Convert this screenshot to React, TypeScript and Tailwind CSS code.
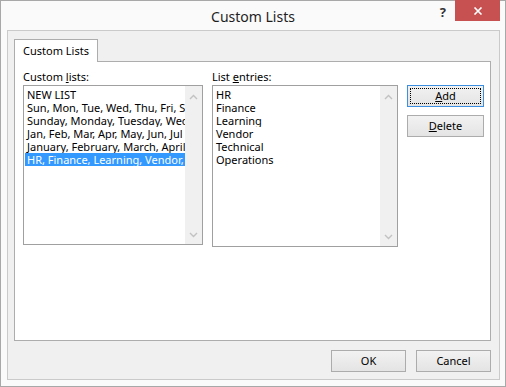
import React from "react";

const font = { fontFamily: '"Noto Sans", "Liberation Sans", sans-serif' };

function Chevron({ up }: { up?: boolean }) {
  return (
    <svg width="9" height="6" viewBox="0 0 9 6" className="block">
      <path
        d={up ? "M1 5 L4.5 1.5 L8 5" : "M1 1 L4.5 4.5 L8 1"}
        fill="none"
        stroke="#c2c2c2"
        strokeWidth="1.4"
      />
    </svg>
  );
}

function ListBox({
  items,
  selected,
  width,
  height,
}: {
  items: string[];
  selected?: number;
  width: string;
  height: string;
}) {
  return (
    <div className={`flex border border-[#a0a0a0] bg-white ${width} ${height}`}>
      <div className="flex-1 min-w-0 overflow-hidden pt-[2px] pl-px">
        {items.map((it, i) => (
          <div
            key={i}
            className={`h-[13px] leading-[13px] pl-[2px] whitespace-nowrap overflow-hidden ${
              i === selected ? "bg-[#3399ff] text-white" : "text-black"
            }`}
          >
            {it}
          </div>
        ))}
      </div>
      <div className="w-[17px] bg-[#f0f0f0] flex flex-col items-center justify-between pt-[8px] pb-[6px]">
        <Chevron up />
        <Chevron />
      </div>
    </div>
  );
}

function Btn({
  children,
  focused,
  className = "",
}: {
  children: React.ReactNode;
  focused?: boolean;
  className?: string;
}) {
  return (
    <div
      className={`h-[22px] border flex items-center justify-center bg-gradient-to-b from-[#f2f2f2] to-[#e4e4e4] text-black ${
        focused ? "border-[#3c8fe0]" : "border-[#acacac]"
      } ${className}`}
    >
      {focused ? (
        <div className="w-[calc(100%-4px)] h-[calc(100%-4px)] border border-dotted border-black flex items-center justify-center">
          {children}
        </div>
      ) : (
        children
      )}
    </div>
  );
}

export default function App() {
  return (
    <div
      className="w-[506px] h-[387px] bg-[#fafafa] border border-[#a8a8a8] flex flex-col text-[11px] text-black"
      style={font}
    >
      <div className="relative h-[29px] flex items-center justify-center">
        <span className="text-[14px] text-[#1e1e1e] mt-[1px]">Custom Lists</span>
        <div className="absolute right-[5px] top-[-1px] flex items-start">
          <span className="text-[13px] font-bold text-[#333] mt-[3px] mr-[9px]">?</span>
          <div className="w-[45px] h-[21px] bg-[#c75050] flex items-center justify-center">
            <svg width="10" height="8" viewBox="0 0 10 8">
              <path d="M1.5 0.5 L8.5 7.5 M8.5 0.5 L1.5 7.5" stroke="white" strokeWidth="1.6" />
            </svg>
          </div>
        </div>
      </div>
      <div className="flex-1 ml-[6px] mr-[5px] mb-[6px] border border-[#cacaca] bg-[#f0f0f0] flex flex-col pt-[7px] pl-[6px] pr-[8px] pb-[7px]">
        <div className="flex">
          <div className="w-[84px] h-[23px] bg-white border border-b-0 border-[#adadad] pl-[8px] pt-[3px] relative top-px">
            Custom Lists
          </div>
        </div>
        <div className="h-[280px] bg-white border border-[#adadad] pt-[7px] pl-[8px] flex gap-[9px]">
          <div className="flex flex-col">
            <div className="h-[16px] leading-[15px]">
              Custom <span className="underline">l</span>ists:
            </div>
            <ListBox
              width="w-[180px]"
              height="h-[160px]"
              selected={5}
              items={[
                "NEW LIST",
                "Sun, Mon, Tue, Wed, Thu, Fri, Sat",
                "Sunday, Monday, Tuesday, Wednesday",
                "Jan, Feb, Mar, Apr, May, Jun, Jul",
                "January, February, March, April",
                "HR, Finance, Learning, Vendor, Technical",
              ]}
            />
          </div>
          <div className="flex flex-col">
            <div className="h-[16px] leading-[15px]">
              List <span className="underline">e</span>ntries:
            </div>
            <ListBox
              width="w-[186px]"
              height="h-[162px]"
              items={["HR", "Finance", "Learning", "Vendor", "Technical", "Operations"]}
            />
          </div>
          <div className="flex flex-col gap-[8px] pt-[16px]">
            <Btn focused className="w-[77px]">
              <span>
                <span className="underline">A</span>dd
              </span>
            </Btn>
            <Btn className="w-[77px]">
              <span>
                <span className="underline">D</span>elete
              </span>
            </Btn>
          </div>
        </div>
        <div className="flex justify-end gap-[10px] mt-[9px]">
          <Btn className="w-[75px]">OK</Btn>
          <Btn className="w-[75px]">Cancel</Btn>
        </div>
      </div>
    </div>
  );
}
